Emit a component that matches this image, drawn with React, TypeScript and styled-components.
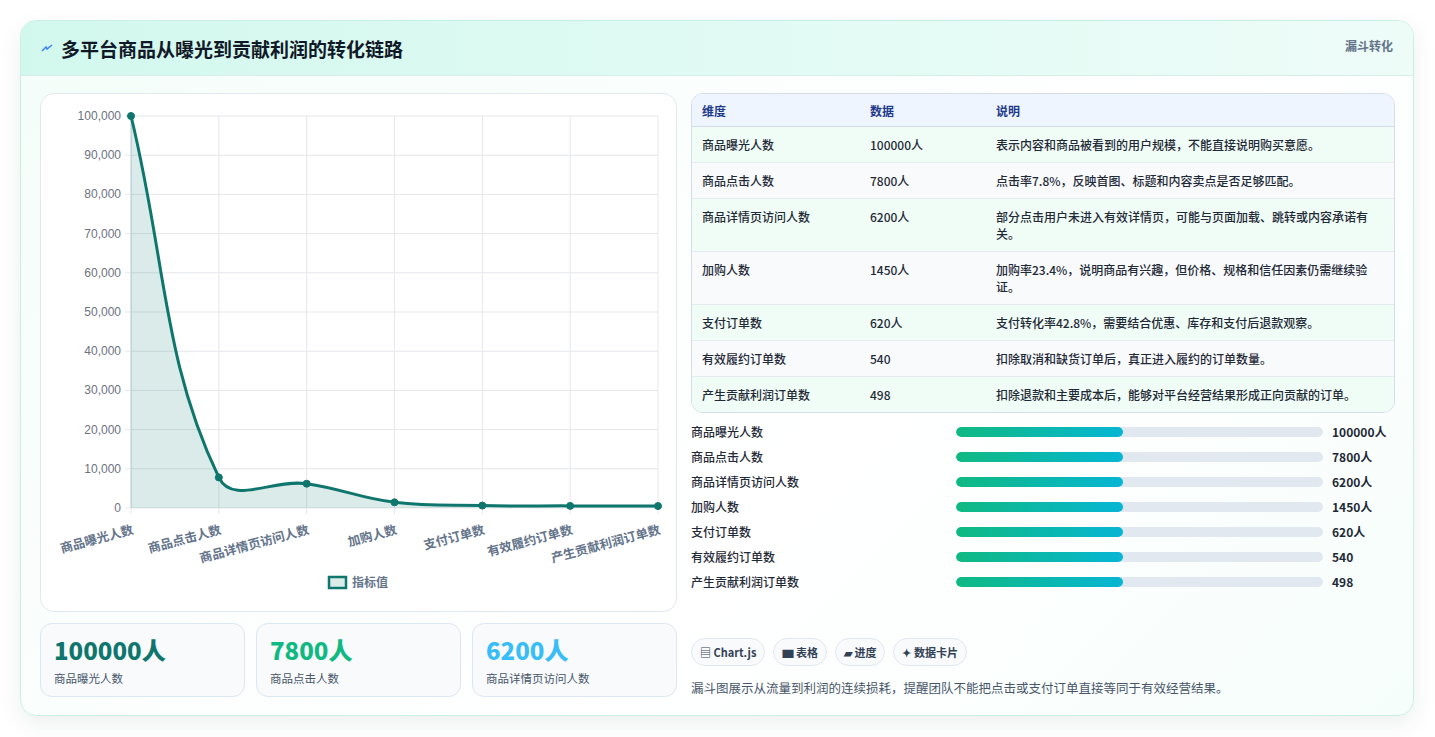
import React from "react";
import styled, { createGlobalStyle } from "styled-components";

const Global = createGlobalStyle`
  html, body { margin: 0; padding: 0; background: #fff; }
  body { font-family: "Noto Sans CJK SC", "Noto Sans", sans-serif; color: #1f2937; }
`;

const Page = styled.div`
  padding: 20px 20px 20px 20px;
  box-sizing: border-box;
  width: 1435px;
  height: 737px;
`;
const Card = styled.div`
  width: 1394px;
  height: 696px;
  box-sizing: border-box;
  border: 1px solid #c9efe4;
  border-radius: 16px;
  background: linear-gradient(135deg, #f4fdf9 0%, #ffffff 60%, #f6fefb 100%);
  box-shadow: 0 8px 24px rgba(15, 60, 50, 0.08);
  overflow: hidden;
  display: flex;
  flex-direction: column;
`;
const Header = styled.div`
  height: 55px;
  box-sizing: border-box;
  display: flex;
  align-items: center;
  justify-content: space-between;
  padding: 0 20px;
  background: linear-gradient(90deg, #d2f8ee 0%, #e3fbf4 60%, #eefcf8 100%);
  border-bottom: 1px solid #d6eee7;
`;
const Title = styled.h1`
  margin: 0;
  font-size: 19px;
  font-weight: 700;
  color: #111827;
  display: flex;
  align-items: center;
  gap: 8px;
`;
const Tag = styled.span`
  font-size: 12px;
  font-weight: 700;
  color: #64748b;
  align-self: flex-start;
  margin-top: 16px;
`;
const Body = styled.div`
  flex: 1;
  display: grid;
  grid-template-columns: 637px 704px;
  gap: 14px;
  padding: 17px 19px 18px 19px;
`;
const Col = styled.div`
  display: flex;
  flex-direction: column;
  gap: 11px;
`;
const ChartBox = styled.div`
  height: 519px;
  box-sizing: border-box;
  border: 1px solid #e2e8f0;
  border-radius: 14px;
  background: #fff;
  position: relative;
`;
const Stats = styled.div`
  display: grid;
  grid-template-columns: repeat(3, 1fr);
  gap: 11px;
`;
const Stat = styled.div`
  height: 74px;
  box-sizing: border-box;
  border: 1px solid #dbe7f3;
  border-radius: 12px;
  background: #f8fafc;
  padding: 10px 13px;
`;
const StatVal = styled.div<{ c: string }>`
  font-size: 24px;
  font-weight: 800;
  color: ${(p) => p.c};
  line-height: 32px;
`;
const StatLbl = styled.div`
  font-size: 11.5px;
  color: #475569;
  margin-top: 4px;
`;
const Table = styled.table`
  width: 100%;
  border-collapse: separate;
  border-spacing: 0;
  border: 1px solid #d5dde8;
  border-radius: 12px;
  overflow: hidden;
  font-size: 12px;
`;
const Th = styled.th`
  text-align: left;
  font-weight: 700;
  color: #1e3a8a;
  background: #eef5ff;
  height: 32px;
  padding: 0 10px;
  border-bottom: 1px solid #d5dde8;
`;
const Tr = styled.tr<{ alt: boolean }>`
  background: ${(p) => (p.alt ? "#f8fafc" : "#f0fdf6")};
`;
const Td = styled.td<{ last?: boolean }>`
  padding: 9px 10px;
  line-height: 17px;
  color: #1f2937;
  font-weight: 500;
  border-bottom: ${(p) => (p.last ? "none" : "1px solid #e5ebf1")};
  vertical-align: top;
`;
const Bars = styled.div`
  display: flex;
  flex-direction: column;
  margin-top: 6px;
`;
const BarRow = styled.div`
  display: grid;
  grid-template-columns: 256px 367px 1fr;
  gap: 9px;
  align-items: center;
  height: 25px;
  font-size: 12px;
  font-weight: 500;
  white-space: nowrap;
`;
const Track = styled.div`
  height: 10px;
  border-radius: 5px;
  background: #e2e8f0;
  overflow: hidden;
`;
const Fill = styled.div`
  height: 100%;
  width: 45.5%;
  border-radius: 5px;
  background: linear-gradient(90deg, #10b981, #06b6d4);
`;
const BarVal = styled.span`
  font-weight: 700;
  color: #1f2937;
`;
const Spacer = styled.div`
  flex: 1;
`;
const Chips = styled.div`
  display: flex;
  gap: 8px;
`;
const Chip = styled.span`
  height: 28px;
  box-sizing: border-box;
  padding: 0 8px;
  display: inline-flex;
  align-items: center;
  gap: 4px;
  border: 1px solid #e2e8f0;
  border-radius: 14px;
  background: #f8fafc;
  font-size: 11px;
  font-weight: 700;
  color: #334155;
`;
const Note = styled.p`
  margin: 12px 0 0;
  font-size: 12.5px;
  color: #475569;
`;
const RightCol = styled.div`
  display: flex;
  flex-direction: column;
`;

const labels = ["商品曝光人数", "商品点击人数", "商品详情页访问人数", "加购人数", "支付订单数", "有效履约订单数", "产生贡献利润订单数"];
const vals = [100000, 7800, 6200, 1450, 620, 540, 498];
const shows = ["100000人", "7800人", "6200人", "1450人", "620人", "540", "498"];
const notes = [
  "表示内容和商品被看到的用户规模，不能直接说明购买意愿。",
  "点击率7.8%，反映首图、标题和内容卖点是否足够匹配。",
  "部分点击用户未进入有效详情页，可能与页面加载、跳转或内容承诺有关。",
  "加购率23.4%，说明商品有兴趣，但价格、规格和信任因素仍需继续验证。",
  "支付转化率42.8%，需要结合优惠、库存和支付后退款观察。",
  "扣除取消和缺货订单后，真正进入履约的订单数量。",
  "扣除退款和主要成本后，能够对平台经营结果形成正向贡献的订单。",
];

const X0 = 90, X1 = 617, Y0 = 22, Y1 = 414;
const px = (i: number) => X0 + ((X1 - X0) * i) / 6;
const py = (v: number) => Y1 - ((Y1 - Y0) * v) / 100000;

function curvePath() {
  const pts = vals.map((v, i) => [px(i), py(v)]);
  const t = 0.4;
  const cps = pts.map((p, i) => {
    const prev = pts[i - 1] || p;
    const next = pts[i + 1] || p;
    const d01 = Math.hypot(p[0] - prev[0], p[1] - prev[1]);
    const d12 = Math.hypot(next[0] - p[0], next[1] - p[1]);
    const s = d01 + d12 || 1;
    const fa = (t * d01) / s, fb = (t * d12) / s;
    return {
      pre: [p[0] - fa * (next[0] - prev[0]), Math.min(Y1, p[1] - fa * (next[1] - prev[1]))],
      post: [p[0] + fb * (next[0] - prev[0]), Math.min(Y1, p[1] + fb * (next[1] - prev[1]))],
    };
  });
  let d = `M${pts[0][0]},${pts[0][1]}`;
  for (let i = 1; i < pts.length; i++) {
    d += ` C${cps[i - 1].post[0]},${cps[i - 1].post[1]} ${cps[i].pre[0]},${cps[i].pre[1]} ${pts[i][0]},${pts[i][1]}`;
  }
  return { d, pts };
}

function Chart() {
  const { d, pts } = curvePath();
  const ticks = Array.from({ length: 11 }, (_, i) => i * 10000);
  return (
    <svg width="637" height="519" style={{ display: "block" }}>
      {ticks.map((v) => (
        <g key={v}>
          <line x1={X0 - 6} x2={X1} y1={py(v)} y2={py(v)} stroke="#e5e7eb" />
          <text x={X0 - 10} y={py(v) + 4} textAnchor="end" fontSize="12" fill="#6b7280" fontFamily="Liberation Sans, sans-serif">
            {v.toLocaleString("en-US")}
          </text>
        </g>
      ))}
      {labels.map((_, i) => (
        <line key={i} x1={px(i)} x2={px(i)} y1={Y0} y2={Y1 + 6} stroke="#e5e7eb" />
      ))}
      <line x1={X0} x2={X0} y1={Y0} y2={Y1} stroke="#cbd5e1" />
      <path d={`${d} L${X1},${Y1} L${X0},${Y1} Z`} fill="rgba(15,118,110,0.15)" />
      <path d={d} fill="none" stroke="#0f766e" strokeWidth="3" />
      {pts.map((p, i) => (
        <circle key={i} cx={p[0]} cy={p[1]} r="3.5" fill="#0f766e" stroke="#0f766e" />
      ))}
      {labels.map((l, i) => (
        <text key={l} x={px(i)} y={Y1 + 14} textAnchor="end" fontSize="12.5" fontWeight="700" fill="#64748b"
          transform={`rotate(-15 ${px(i)} ${Y1 + 14})`} dominantBaseline="hanging">
          {l}
        </text>
      ))}
      <rect x="288" y="483" width="17" height="11" fill="rgba(15,118,110,0.15)" stroke="#0f766e" strokeWidth="2.5" />
      <text x="311" y="493" fontSize="12" fontWeight="600" fill="#64748b">指标值</text>
    </svg>
  );
}

export default function App() {
  return (
    <Page>
      <Global />
      <Card>
        <Header>
          <Title>
            <svg width="12" height="12" viewBox="0 0 12 12"><path d="M1 9 L5 5 L6 7 L11 3" stroke="#3b82f6" strokeWidth="1.5" fill="none" /></svg>
            多平台商品从曝光到贡献利润的转化链路
          </Title>
          <Tag>漏斗转化</Tag>
        </Header>
        <Body>
          <Col>
            <ChartBox><Chart /></ChartBox>
            <Stats>
              <Stat><StatVal c="#0f766e">100000人</StatVal><StatLbl>商品曝光人数</StatLbl></Stat>
              <Stat><StatVal c="#10b981">7800人</StatVal><StatLbl>商品点击人数</StatLbl></Stat>
              <Stat><StatVal c="#38bdf8">6200人</StatVal><StatLbl>商品详情页访问人数</StatLbl></Stat>
            </Stats>
          </Col>
          <RightCol>
            <Table>
              <colgroup>
                <col style={{ width: 168 }} />
                <col style={{ width: 126 }} />
                <col />
              </colgroup>
              <thead>
                <tr><Th>维度</Th><Th>数据</Th><Th>说明</Th></tr>
              </thead>
              <tbody>
                {labels.map((l, i) => (
                  <Tr key={l} alt={i % 2 === 1}>
                    <Td last={i === 6}>{l}</Td>
                    <Td last={i === 6}>{shows[i]}</Td>
                    <Td last={i === 6}>{notes[i]}</Td>
                  </Tr>
                ))}
              </tbody>
            </Table>
            <Bars>
              {labels.map((l, i) => (
                <BarRow key={l}>
                  <span>{l}</span>
                  <Track><Fill /></Track>
                  <BarVal>{shows[i]}</BarVal>
                </BarRow>
              ))}
            </Bars>
            <Spacer />
            <Chips>
              <Chip>▤ Chart.js</Chip>
              <Chip>▆ 表格</Chip>
              <Chip>▰ 进度</Chip>
              <Chip>✦ 数据卡片</Chip>
            </Chips>
            <Note>漏斗图展示从流量到利润的连续损耗，提醒团队不能把点击或支付订单直接等同于有效经营结果。</Note>
          </RightCol>
        </Body>
      </Card>
    </Page>
  );
}
